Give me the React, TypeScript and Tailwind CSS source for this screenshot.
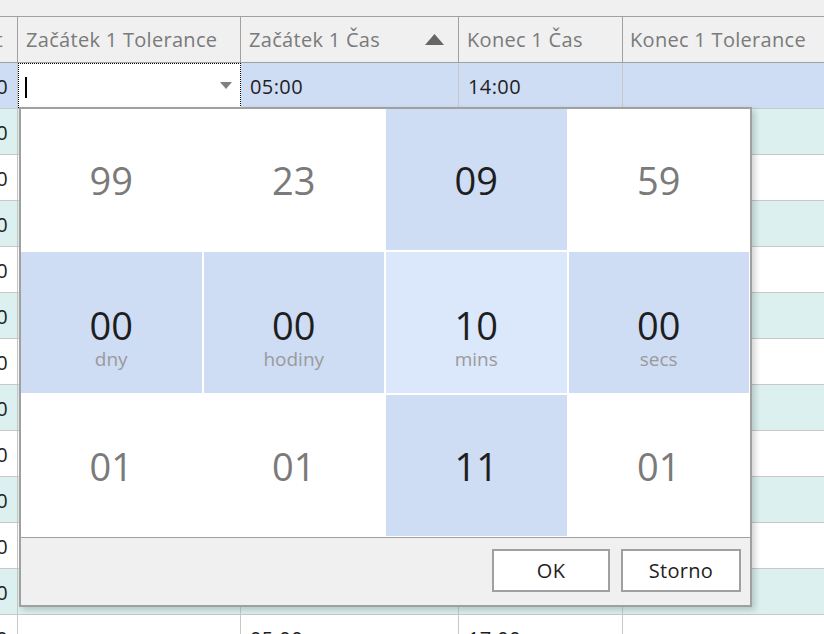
const body = "font-['Open_Sans',sans-serif]"

type Cell = { value: string; label?: string; tone: 'plain' | 'sel' | 'focus' }

const cells: Cell[] = [
  { value: '99', tone: 'plain' },
  { value: '23', tone: 'plain' },
  { value: '09', tone: 'sel' },
  { value: '59', tone: 'plain' },
  { value: '00', label: 'dny', tone: 'sel' },
  { value: '00', label: 'hodiny', tone: 'sel' },
  { value: '10', label: 'mins', tone: 'focus' },
  { value: '00', label: 'secs', tone: 'sel' },
  { value: '01', tone: 'plain' },
  { value: '01', tone: 'plain' },
  { value: '11', tone: 'sel' },
  { value: '01', tone: 'plain' },
]

const rows = Array.from({ length: 12 }, (_, i) => i)

function HeaderRow() {
  return (
    <div className="flex h-[46px] border-b border-[#a0a0a0] bg-[#f0f0f0] text-[20px] tracking-[0.3px] text-[#7a7a7a]">
      <div className="flex w-[18px] shrink-0 items-center justify-end overflow-hidden border-r border-[#a0a0a0] pr-[14px] whitespace-nowrap">
        Limit
      </div>
      <div className="flex w-[223px] shrink-0 items-center border-r border-[#a0a0a0] pl-[8px] whitespace-nowrap">
        Začátek 1 Tolerance
      </div>
      <div className="flex w-[218px] shrink-0 items-center justify-between border-r border-[#a0a0a0] pl-[8px] pr-[14px] whitespace-nowrap">
        <span>Začátek 1 Čas</span>
        <svg width="19" height="11" viewBox="0 0 19 11">
          <path d="M9.5 0 L19 11 L0 11 Z" fill="#666" />
        </svg>
      </div>
      <div className="flex w-[164px] shrink-0 items-center border-r border-[#a0a0a0] pl-[8px] whitespace-nowrap">
        Konec 1 Čas
      </div>
      <div className="flex flex-1 items-center pl-[7px] whitespace-nowrap">Konec 1 Tolerance</div>
    </div>
  )
}

function DataRow({ index }: { index: number }) {
  const bg = index % 2 === 0 ? 'bg-[#dcf0f0]' : 'bg-white'
  const end = index === 11 ? '17:00' : '14:00'
  return (
    <div className={`flex h-[46px] border-b border-[#c8c8c8] text-[20px] tracking-[0.4px] text-[#1e1e1e] ${bg}`}>
      <div className="flex w-[18px] shrink-0 items-center justify-end overflow-hidden border-r border-[#c8c8c8] pr-[9px] pt-[2px] whitespace-nowrap">
        10:00
      </div>
      <div className="w-[223px] shrink-0 border-r border-[#c8c8c8]" />
      <div className="flex w-[218px] shrink-0 items-center border-r border-[#c8c8c8] pl-[9px] pt-[2px]">05:00</div>
      <div className="flex w-[164px] shrink-0 items-center border-r border-[#c8c8c8] pl-[9px] pt-[2px]">{end}</div>
      <div className="flex-1" />
    </div>
  )
}

function TimeCell({ cell }: { cell: Cell }) {
  const bg = cell.tone === 'sel' ? 'bg-[#cedcf4]' : cell.tone === 'focus' ? 'bg-[#dbe7fa]' : 'bg-white'
  const color = cell.tone === 'plain' ? 'text-[#7a7a7a]' : 'text-[#1e1e1e]'
  return (
    <div className={`flex flex-col items-center justify-center ${bg} ${cell.label ? 'pt-[31px]' : ''}`}>
      <span className={`text-[38px] leading-[40px] ${color}`}>{cell.value}</span>
      {cell.label && <span className="mt-[2px] text-[19px] leading-[24px] text-[#9a9a9a]">{cell.label}</span>}
    </div>
  )
}

export default function App() {
  return (
    <div className={`relative h-[634px] w-[824px] overflow-hidden bg-white ${body}`}>
      <div className="h-[17px] border-b border-[#a0a0a0] bg-[#f0f0f0]" />
      <HeaderRow />

      {/* selected row with the editor */}
      <div className="flex h-[46px] border-b border-[#c8c8c8] bg-[#cedcf4] text-[20px] tracking-[0.4px] text-[#1e1e1e]">
        <div className="flex w-[18px] shrink-0 items-center justify-end overflow-hidden border-r border-[#c8c8c8] pr-[9px] pt-[2px] whitespace-nowrap">
          10:00
        </div>
        <div className="flex w-[223px] shrink-0 items-center justify-between border border-dotted border-black bg-white pl-[6px] pr-[8px]">
          <span className="mt-[4px] h-[21px] w-[2px] bg-black" />
          <svg width="12" height="7" viewBox="0 0 12 7">
            <path d="M0 0 L12 0 L6 7 Z" fill="#808080" />
          </svg>
        </div>
        <div className="flex w-[218px] shrink-0 items-center border-r border-[#c8c8c8] pl-[9px] pt-[2px]">05:00</div>
        <div className="flex w-[164px] shrink-0 items-center border-r border-[#c8c8c8] pl-[9px] pt-[2px]">14:00</div>
        <div className="flex-1" />
      </div>

      {rows.map((i) => (
        <DataRow key={i} index={i} />
      ))}

      {/* time span editor popup */}
      <div className="absolute left-[19px] top-[107px] flex h-[500px] w-[733px] flex-col border-2 border-[#a0a0a0] bg-white shadow-[3px_3px_6px_rgba(0,0,0,0.18)]">
        <div className="grid flex-1 grid-cols-4 grid-rows-3 gap-[2px] pb-[1px] pr-[1px]">
          {cells.map((c, i) => (
            <TimeCell key={i} cell={c} />
          ))}
        </div>
        <div className="flex h-[68px] items-start justify-end gap-[11px] border-t border-[#a0a0a0] bg-[#f0f0f0] pr-[9px] pt-[11px]">
          <button className="h-[43px] w-[118px] border-2 border-[#a0a0a0] bg-white text-[20px] tracking-[0.3px] text-[#1e1e1e]">OK</button>
          <button className="h-[43px] w-[120px] border-2 border-[#a0a0a0] bg-white text-[20px] tracking-[0.3px] text-[#1e1e1e]">Storno</button>
        </div>
      </div>
    </div>
  )
}
